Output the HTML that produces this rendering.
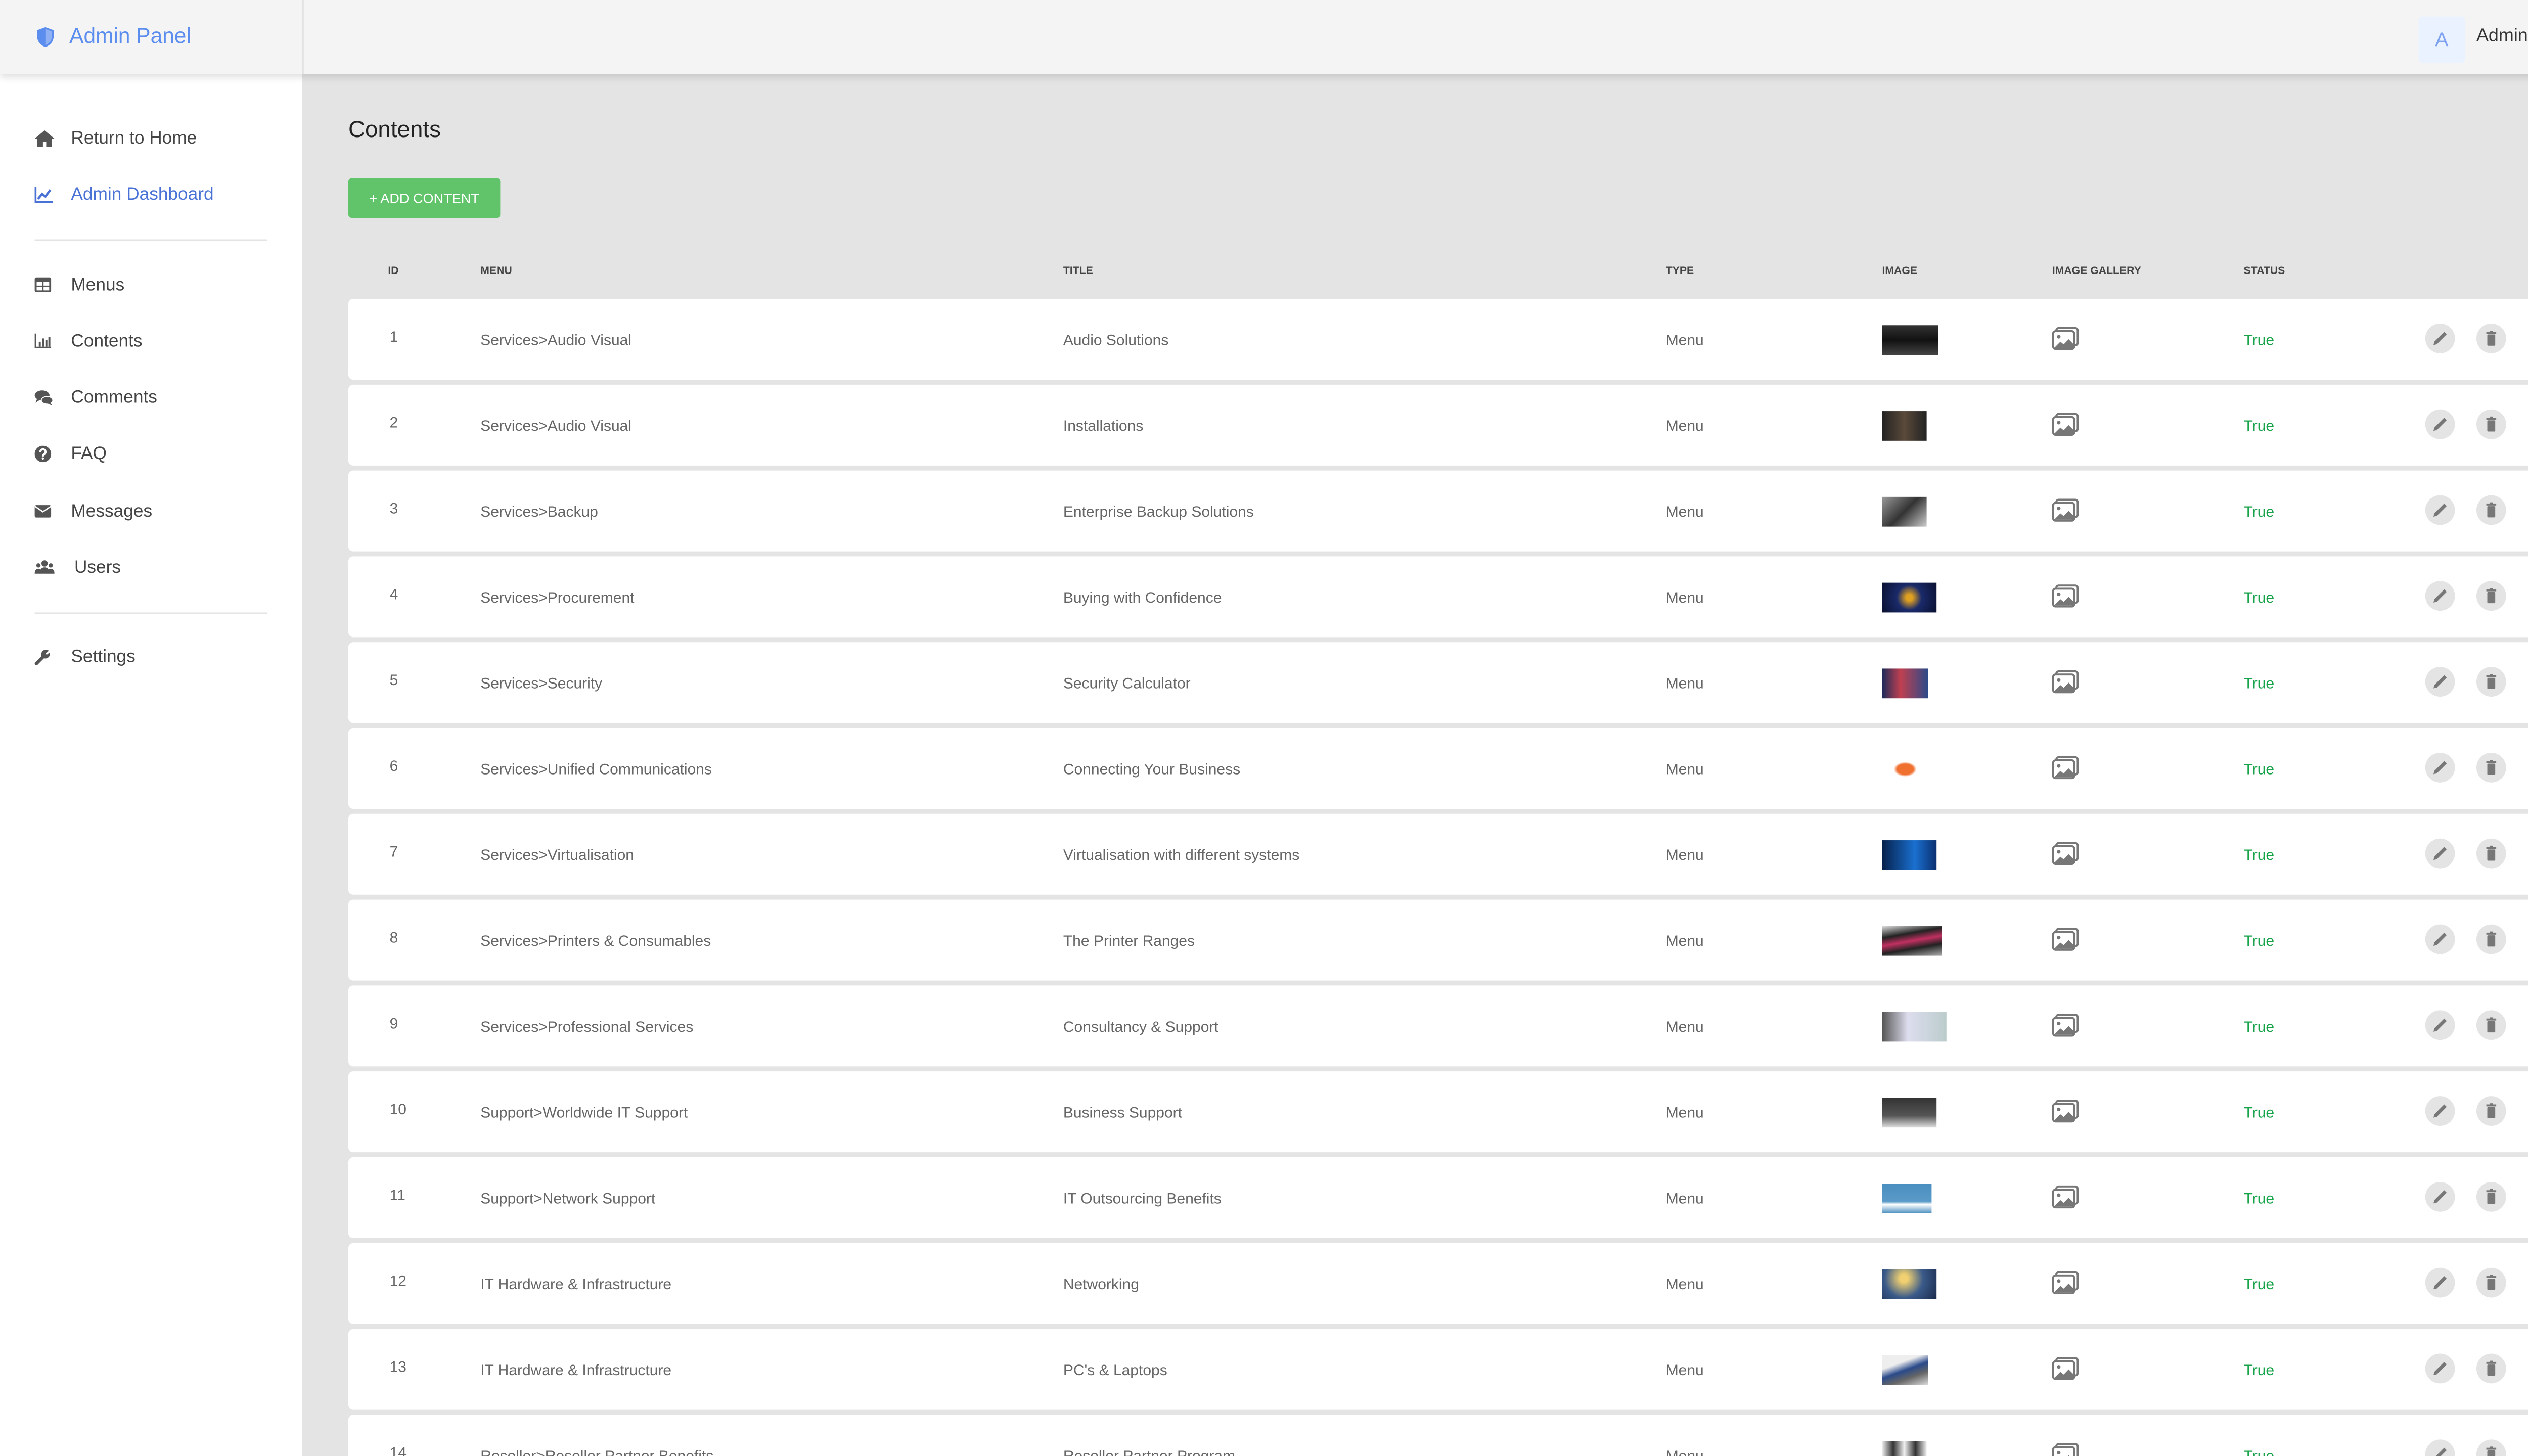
<!DOCTYPE html>
<html><head><meta charset="utf-8">
<style>
html,body{margin:0;padding:0;width:5120px;height:2880px;overflow:hidden;background:#e4e4e4;}
#s{position:absolute;left:0;top:0;width:1568px;height:882px;transform:scale(3.265306);transform-origin:0 0;font-family:"Liberation Sans",sans-serif;color:#444;background:#e4e4e4;overflow:hidden;}
.hdr{position:absolute;left:0;top:0;width:1568px;height:45px;background:#f4f4f4;box-shadow:0 2px 4px rgba(0,0,0,.12);z-index:2}
.side{position:absolute;left:0;top:45px;width:183px;height:837px;background:#fff;z-index:1}
.brand{position:absolute;left:22px;top:14px;font-size:13px;color:#5b8def}
.vline{position:absolute;left:183px;top:0;width:1px;height:45px;background:#e2e2e2}
.nav{position:absolute;left:0;font-size:10.8px;color:#444;height:14px}
.nav svg{position:absolute;left:21px;top:1px}
.nav span{position:absolute;left:43px;top:0;white-space:nowrap}
.sep{position:absolute;left:21px;width:141px;height:1px;background:#e4e4e4}
h1{position:absolute;left:211px;top:70px;margin:0;font-size:14px;font-weight:normal;color:#222}
.btn{position:absolute;left:211px;top:108px;width:92px;height:24px;background:#62c46a;border-radius:2px;color:#fff;font-size:8.3px;line-height:24px;text-align:center}
.th{position:absolute;top:161px;font-size:6.5px;font-weight:bold;color:#444}
.row{position:absolute;left:211px;width:1329px;height:49px;background:#fff;border-radius:3px}
.row div{position:absolute;font-size:9.2px;color:#666;white-space:nowrap}
.id{left:25px;top:18px}
.mn{left:80px;top:19.5px}
.tt{left:433px;top:19.5px}
.ty{left:798px;top:19.5px}
.im{left:929px!important;top:16px;height:18px}
.gal{left:1032px!important;top:17px}
.st{left:1148px;top:19.5px;color:#17a34a!important}
.c{width:18px;height:18px;border-radius:50%;background:#e4e4e4;top:15px}
.c svg{position:absolute;left:4px;top:4px}
</style></head><body><div id="s">
<div class="hdr">
  <svg style="position:absolute;left:22px;top:16px" width="11" height="13" viewBox="0 0 11 13"><path d="M5.5 0.5L10.5 2.3V6c0 3.2-2.2 5.5-5 6.5C2.7 11.5 0.5 9.2 0.5 6V2.3z" fill="#5b8def"/><path d="M5.5 1.6V11.3C7.6 10.4 9.4 8.6 9.4 6V3z" fill="#8fb0f3"/></svg>
  <div class="brand" style="left:42px">Admin Panel</div>
  <div class="vline"></div>
  <div style="position:absolute;left:1465px;top:9.5px;width:28px;height:28px;background:#eaf2ff;border-radius:2px;color:#7ea2f0;font-size:12px;text-align:center;line-height:28px">A</div>
  <div style="position:absolute;left:1500px;top:16px;font-size:11px;color:#333">Admin</div>
  <svg style="position:absolute;left:1535px;top:20px" width="6" height="4" viewBox="0 0 6 4"><path d="M0.5 0.5L3 3 5.5 0.5" stroke="#333" fill="none" stroke-width="1"/></svg>
</div>
<div class="side"></div>
<div style="position:absolute;left:0;top:0;z-index:3">
  <div class="nav" style="top:78px"><svg width="12" height="10" viewBox="0 0 12 10"><path d="M6 0L0 5h1.5v5h3.5V7h2v3h3.5V5H12z" fill="#555"/></svg><span>Return to Home</span></div>
  <div class="nav" style="top:112px;color:#4a72d6"><svg width="11" height="10" viewBox="0 0 11 10"><path d="M0.5 0v9.5H11" stroke="#4a72d6" stroke-width="1.2" fill="none"/><path d="M2 7.5L4.5 4.5 6.5 6 9.5 2" stroke="#4a72d6" stroke-width="1.4" fill="none"/></svg><span>Admin Dashboard</span></div>
  <div class="sep" style="top:145px"></div>
  <div class="nav" style="top:167px"><svg width="10" height="9" viewBox="0 0 10 9"><rect width="10" height="9" rx="1" fill="#555"/><rect x="1.2" y="2.6" width="3.4" height="2.4" fill="#fff"/><rect x="5.4" y="2.6" width="3.4" height="2.4" fill="#fff"/><rect x="1.2" y="5.7" width="3.4" height="2.2" fill="#fff"/><rect x="5.4" y="5.7" width="3.4" height="2.2" fill="#fff"/></svg><span>Menus</span></div>
  <div class="nav" style="top:201px"><svg width="10" height="9" viewBox="0 0 10 9"><path d="M0.5 0v8.5H10" stroke="#555" fill="none"/><rect x="2.5" y="5" width="1.2" height="3" fill="#555"/><rect x="4.5" y="3" width="1.2" height="5" fill="#555"/><rect x="6.5" y="4" width="1.2" height="4" fill="#555"/><rect x="8.3" y="2" width="1.2" height="6" fill="#555"/></svg><span>Contents</span></div>
  <div class="nav" style="top:235px"><svg width="11" height="10" viewBox="0 0 11 10"><ellipse cx="4.5" cy="3.5" rx="4.5" ry="3" fill="#555"/><path d="M1.5 5.5L0.5 8 3.5 6z" fill="#555"/><ellipse cx="7.5" cy="6.5" rx="3.5" ry="2.3" fill="#555" stroke="#fff" stroke-width=".6"/><path d="M9.5 8L10.7 9.6 8 8.6z" fill="#555"/></svg><span>Comments</span></div>
  <div class="nav" style="top:269px"><svg width="10" height="10" viewBox="0 0 10 10"><circle cx="5" cy="5" r="5" fill="#555"/><path d="M3.4 3.8a1.6 1.6 0 1 1 2.3 1.4c-.5.3-.7.5-.7 1v.3" stroke="#fff" stroke-width="1.2" fill="none"/><circle cx="5" cy="7.7" r=".7" fill="#fff"/></svg><span>FAQ</span></div>
  <div class="nav" style="top:304px"><svg width="10" height="9" viewBox="0 0 10 9"><rect y="1" width="10" height="7.5" rx="1" fill="#555"/><path d="M0.3 1.8L5 5 9.7 1.8" stroke="#fff" stroke-width=".8" fill="none"/></svg><span>Messages</span></div>
  <div class="nav" style="top:338px"><svg width="12" height="9" viewBox="0 0 12 9"><circle cx="6" cy="2.3" r="1.9" fill="#555"/><circle cx="2.3" cy="3.5" r="1.3" fill="#555"/><circle cx="9.7" cy="3.5" r="1.3" fill="#555"/><path d="M3 8.5c0-2.6 1.3-3.8 3-3.8s3 1.2 3 3.8z" fill="#555"/><path d="M0 8.5c0-2 .9-3 2.3-3 .6 0 1 .2 1.3.4-.4.7-.5 1.6-.5 2.6z" fill="#555"/><path d="M12 8.5c0-2-.9-3-2.3-3-.6 0-1 .2-1.3.4.4.7.5 1.6.5 2.6z" fill="#555"/></svg><span style="left:45px">Users</span></div>
  <div class="sep" style="top:371px"></div>
  <div class="nav" style="top:392px"><svg width="10" height="10" viewBox="0 0 10 10"><path d="M1 9L5.5 4.5" stroke="#555" stroke-width="2" stroke-linecap="round"/><path d="M5 5.5A2.8 2.8 0 0 1 8.6 1.2L6.8 2.8 7.2 3.7 9.1 2.2A2.8 2.8 0 0 1 5 5.5z" fill="#555"/></svg><span>Settings</span></div>
</div>
<h1>Contents</h1>
<div class="btn">+ ADD CONTENT</div>
<div class="th" style="left:235px">ID</div>
<div class="th" style="left:291px">MENU</div>
<div class="th" style="left:644px">TITLE</div>
<div class="th" style="left:1009px">TYPE</div>
<div class="th" style="left:1140px">IMAGE</div>
<div class="th" style="left:1243px">IMAGE GALLERY</div>
<div class="th" style="left:1359px">STATUS</div>
<div id="rows"></div>
</div>
<script>
var d=[
["1","Services>Audio Visual","Audio Solutions",34,"linear-gradient(#333,#111 50%,#444)"],
["2","Services>Audio Visual","Installations",27,"linear-gradient(90deg,#222,#5a4a3a,#222)"],
["3","Services>Backup","Enterprise Backup Solutions",27,"linear-gradient(135deg,#999,#333 50%,#ccc)"],
["4","Services>Procurement","Buying with Confidence",33,"radial-gradient(circle,#e0a020 10%,#1a2a6a 40%,#0a1030)"],
["5","Services>Security","Security Calculator",28,"linear-gradient(90deg,#1a2a5a,#c04050 40%,#2a4a8a)"],
["6","Services>Unified Communications","Connecting Your Business",28,"radial-gradient(ellipse,#f07030 25%,#fff 35%)"],
["7","Services>Virtualisation","Virtualisation with different systems",33,"linear-gradient(90deg,#06204a,#1a70d0 60%,#0a3070)"],
["8","Services>Printers & Consumables","The Printer Ranges",36,"linear-gradient(170deg,#ddd,#222 30%,#c03060 50%,#222 70%,#aaa)"],
["9","Services>Professional Services","Consultancy & Support",39,"linear-gradient(90deg,#555,#dde 40%,#bcc)"],
["10","Support>Worldwide IT Support","Business Support",33,"linear-gradient(#333,#555 60%,#ddd)"],
["11","Support>Network Support","IT Outsourcing Benefits",30,"linear-gradient(#4a8fc0,#5a9ac8 60%,#fff 70%,#4a8fc0)"],
["12","IT Hardware & Infrastructure","Networking",33,"radial-gradient(circle at 40% 30%,#f0d070 10%,#3a5a8a 50%,#1a2a4a)"],
["13","IT Hardware & Infrastructure","PC's & Laptops",28,"linear-gradient(160deg,#eee 30%,#2a4a8a 50%,#666 70%,#ddd)"],
["14","Reseller>Reseller Partner Benefits","Reseller Partner Program",27,"linear-gradient(90deg,#eee,#333,#eee,#333,#eee)"]];
var gal='<svg width="16" height="14" viewBox="0 0 16 14"><rect x="2.5" y="0.7" width="13" height="10.5" rx="1.5" fill="none" stroke="#777" stroke-width="1.2"/><rect x="0.6" y="2.6" width="12.8" height="10.8" rx="1.5" fill="#fff" stroke="#777" stroke-width="1.2"/><circle cx="4" cy="6" r="1.1" fill="#777"/><path d="M1.2 12.8L5 9 7 10.6 10 7.5 13 10.5V12.8z" fill="#777"/></svg>';
var pen='<svg width="10" height="10" viewBox="0 0 10 10"><path d="M7.5 1L9 2.5 3 8.5 1 9 1.5 7z" fill="#777"/></svg>';
var tr='<svg width="10" height="10" viewBox="0 0 10 10"><rect x="2" y="1" width="6" height="1.2" fill="#777"/><rect x="4" y="0.3" width="2" height="1" fill="#777"/><rect x="2.6" y="2.6" width="4.8" height="6.8" rx=".6" fill="#777"/></svg>';
var h='';
d.forEach(function(r,i){
 var t=181+52*i;
 h+='<div class="row" style="top:'+t+'px"><div class="id">'+r[0]+'</div><div class="mn">'+r[1].replace(/&/g,'&amp;')+'</div><div class="tt">'+r[2].replace(/&/g,'&amp;')+'</div><div class="ty">Menu</div><div class="im" style="width:'+r[3]+'px;background:'+r[4]+'"></div><div class="gal">'+gal+'</div><div class="st">True</div><div class="c" style="left:1258px">'+pen+'</div><div class="c" style="left:1289px">'+tr+'</div></div>';
});
document.getElementById('rows').innerHTML=h;
</script>
</body></html>
